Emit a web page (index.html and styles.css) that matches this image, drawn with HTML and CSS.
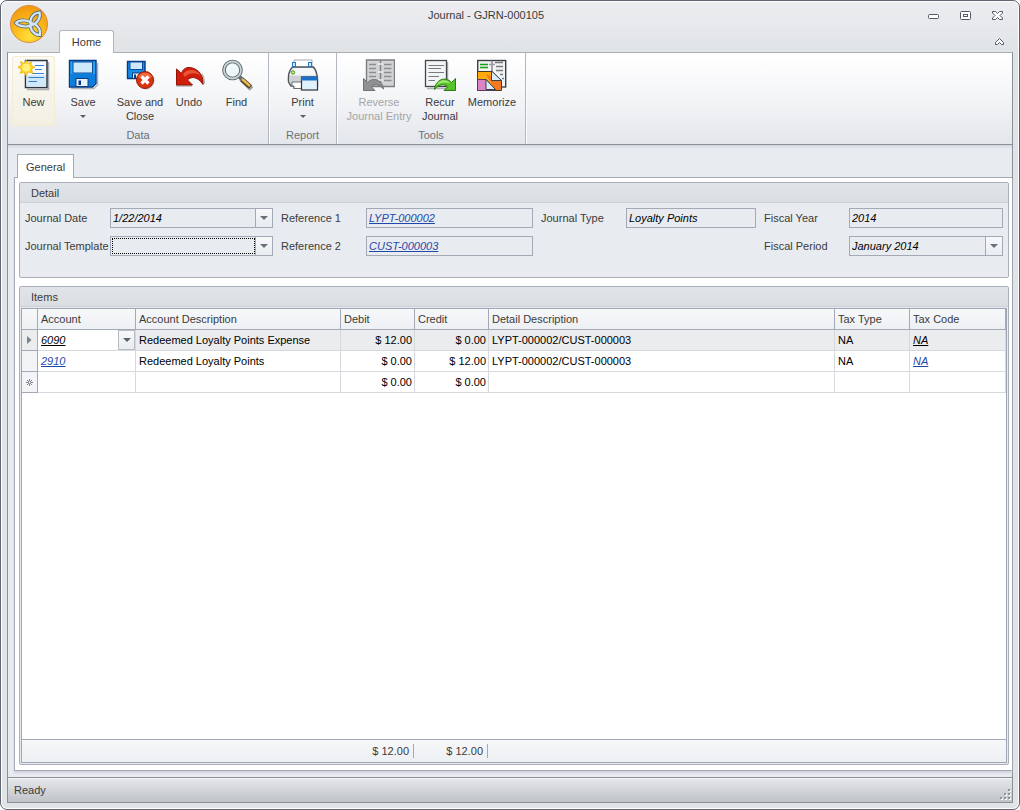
FILE: index.html
```html
<!DOCTYPE html>
<html lang="en">
<head>
    <meta charset="UTF-8">
    <meta name="viewport" content="width=device-width, initial-scale=1.0">
    <title>Journal - GJRN-000105</title>
    <link rel="stylesheet" href="styles.css">
</head>
<body>

    <div class="window">
        <header class="titlebar">
            <button class="app-button" aria-label="Application menu">
                <svg width="40" height="40" viewBox="0 0 40 40">
                    <defs>
                        <radialGradient id="orb" cx="50%" cy="85%" r="80%">
                            <stop offset="0" stop-color="#ffe03a"/>
                            <stop offset="0.5" stop-color="#fdbb1c"/>
                            <stop offset="1" stop-color="#f39a10"/>
                        </radialGradient>
                    </defs>
                    <circle cx="20" cy="20" r="18.5" fill="url(#orb)" stroke="#dc8a3c"/>
                    <g fill="none" stroke="#5b6a78" stroke-width="3.8">
                        <path d="M24 20.5C19 15 10 15.500 7 19C10 22.500 19 24 24 20.5Z"/>
                        <path d="M22 21C20 15 24 9 30.500 8.500C32 13 28.500 20 22 21Z"/>
                        <path d="M22 19C28 20 32 25 31 31C25 31 20 25 22 19Z"/>
                    </g>
                    <g fill="none" stroke="#d3e6f4" stroke-width="2.2">
                        <path d="M24 20.5C19 15 10 15.500 7 19C10 22.500 19 24 24 20.5Z"/>
                        <path d="M22 21C20 15 24 9 30.500 8.500C32 13 28.500 20 22 21Z"/>
                        <path d="M22 19C28 20 32 25 31 31C25 31 20 25 22 19Z"/>
                    </g>
                </svg>
            </button>
            <div class="title-text">Journal - GJRN-000105</div>
            <div class="window-buttons">
                <button aria-label="Minimize">
                    <svg width="13" height="13" viewBox="0 0 13 13"><rect x="1.5" y="5.5" width="10" height="4" rx="1" fill="#fff" stroke="#535a66"/></svg>
                </button>
                <button aria-label="Restore">
                    <svg width="13" height="13" viewBox="0 0 13 13"><rect x="1.5" y="2.5" width="10" height="8" rx="1" fill="#fff" stroke="#535a66"/><rect x="4.5" y="5.5" width="4" height="2" fill="#fff" stroke="#535a66"/></svg>
                </button>
                <button aria-label="Close">
                    <svg width="13" height="13" viewBox="0 0 13 13"><path d="M1.5 2.5H4.5L6.5 4.5L8.5 2.5H11.5V4L9 6.5L11.5 9V10.5H8.5L6.5 8.5L4.5 10.5H1.5V9L4 6.5L1.5 4Z" fill="#fff" stroke="#535a66"/></svg>
                </button>
            </div>
            <nav class="ribbon-tabs">
                <button class="ribbon-tab">Home</button>
                <button class="collapse" aria-label="Collapse ribbon">
                    <svg width="11" height="9" viewBox="0 0 11 9"><path d="M5.5 1.5L9.5 5.5V7.5H7.5L5.5 5.5L3.5 7.5H1.5V5.5Z" fill="#fff" stroke="#535a66"/></svg>
                </button>
            </nav>
        </header>

        <div class="frame">
            <div class="ribbon">
                <section class="ribbon-group">
                    <div class="tools data-tools">
                        <button class="tool active">
                            <svg width="32" height="32" viewBox="0 0 32 32">
                                <path d="M9 30.500H30.500V3" fill="none" stroke="#a9adb2" stroke-width="1.600"/>
                                <rect x="7.500" y="1.500" width="21.500" height="27" fill="#f4faff" stroke="#2f353c" stroke-width="1.500"/>
                                <path d="M8.500 16H28V27.700H8.500Z" fill="#cfe8fa"/>
                                <path d="M17 6.500H26M17 10.500H24M14 14.500H26M10.500 18.500H26M10.500 22.500H19" stroke="#3b7ed0" stroke-width="1.200"/>
                                <path d="M8 1L10 4.500L13.500 2.500L13 6.500L17 8L13.500 10.500L15 14.500L10.500 13L8 17L6 13L2 14.500L3.500 10.500L-0.500 8L3.500 6.500L2.500 2.500L6.500 4.500Z" fill="#ffd21e" stroke="#e5a800" stroke-width="0.600"/>
                                <circle cx="8.300" cy="8.500" r="4" fill="#fff27a"/>
                            </svg>
                            <span>New</span>
                        </button>
                        <button class="tool">
                            <svg width="32" height="32" viewBox="0 0 32 32">
                                <path d="M4 29.500H27L30.500 26V4" fill="none" stroke="#b5b9be" stroke-width="1.500"/>
                                <path d="M2.500 1.500H29V24.500L25.500 28H2.500Z" fill="#27a3f0" stroke="#063a86" stroke-width="1.400"/>
                                <path d="M3.500 15H28V24L25 27H3.500Z" fill="#0b7ddd"/>
                                <rect x="6" y="3" width="19.500" height="11" fill="#cfe9fc" stroke="#0b4c9c"/>
                                <rect x="9" y="19.500" width="12" height="8" fill="#e9f3fa" stroke="#083e80"/>
                                <rect x="11.500" y="21.500" width="2.500" height="4.500" fill="#063a86"/>
                            </svg>
                            <span>Save</span>
                            <i class="arrow"></i>
                        </button>
                        <button class="tool">
                            <svg width="32" height="32" viewBox="0 0 32 32">
                                <path d="M3.500 2.500H21V19.500H3.500Z" fill="#168fe8" stroke="#063a86" stroke-width="1.400"/>
                                <rect x="6" y="3" width="12.500" height="7.500" fill="#cfe9fc" stroke="#0b4c9c"/>
                                <rect x="8.500" y="14" width="9" height="5.500" fill="#e9f3fa" stroke="#083e80"/>
                                <rect x="10" y="15.500" width="2" height="3.500" fill="#063a86"/>
                                <circle cx="22" cy="22" r="8.500" fill="#8b8f95" opacity="0.5"/>
                                <circle cx="21" cy="21" r="8.500" fill="#d9340f" stroke="#9c1d04"/>
                                <path d="M14 18A8 8 0 0 1 28 18Q21 22 14 18Z" fill="#ef6a42"/>
                                <path d="M17.500 17.500L24.500 24.500M24.500 17.500L17.500 24.500" stroke="#fff" stroke-width="3.200"/>
                            </svg>
                            <span>Save and<br>Close</span>
                        </button>
                        <button class="tool">
                            <svg width="32" height="32" viewBox="0 0 32 32">
                                <path d="M3 27H19M31 25Q32 20 29 15" fill="none" stroke="#b5b9be" stroke-width="1.500"/>
                                <path d="M3.500 10V26H19.500L14.500 21C18 17 25 17.500 30 25.500C31 14 22 8 15 8.500C11.500 9 9.500 11 8.500 14.500Z" fill="#cf1f0b" stroke="#941104"/>
                                <path d="M10 15C13 10 22 8.500 28 16.500C21 12.500 15 14 12 18Z" fill="#e9553a"/>
                            </svg>
                            <span>Undo</span>
                        </button>
                        <button class="tool">
                            <svg width="32" height="32" viewBox="0 0 32 32">
                                <path d="M20 20L30.500 30" stroke="#9b9fa5" stroke-width="5"/>
                                <path d="M18 17.500L22 21" stroke="#676e74" stroke-width="4"/>
                                <path d="M21 20.500L29.500 28" stroke="#5c461a" stroke-width="5"/>
                                <path d="M21 20L29 27" stroke="#e6b95a" stroke-width="2.400"/>
                                <circle cx="11.500" cy="11" r="8.500" fill="#eef7f8" stroke="#596167" stroke-width="3.600"/>
                                <circle cx="11.500" cy="11" r="8.500" fill="none" stroke="#c6d2d4" stroke-width="1.800"/>
                                <path d="M7 11A5 5 0 0 1 11.500 6" fill="none" stroke="#fff" stroke-width="1.600"/>
                            </svg>
                            <span>Find</span>
                        </button>
                    </div>
                    <div class="group-name">Data</div>
                </section>

                <section class="ribbon-group">
                    <div class="tools report-tools">
                        <button class="tool">
                            <svg width="32" height="32" viewBox="0 0 32 32">
                                <path d="M7 1H25V9H7Z" fill="#fff" stroke="#a4a9af"/>
                                <path d="M5.500 8H26.500Q30 12 30.500 20V27H26V29H7V27H4L1.500 23Q0.500 13 5.500 8Z" fill="#cfd1d4" stroke="#4d5259" stroke-width="1.300"/>
                                <path d="M6.500 9H25.500Q28 12 29 16.500H2.500Q3.500 12 6.500 9Z" fill="#f5f6f7"/>
                                <path d="M5 23H17V29.500H7V27H5Z" fill="#fff" stroke="#6b7077"/>
                                <rect x="5.500" y="3.500" width="3" height="4" fill="#cfe9fc" stroke="#1d7ccc"/>
                                <rect x="21.500" y="3.500" width="3" height="4" fill="#cfe9fc" stroke="#1d7ccc"/>
                                <circle cx="6" cy="13.500" r="1.700" fill="#bff07a" stroke="#4b9b1b"/>
                                <rect x="14.500" y="18" width="16" height="13" fill="#dff1fd" stroke="#2f353c" stroke-width="1.200"/>
                                <rect x="14" y="17.500" width="17" height="4" fill="#1c6fc8"/>
                            </svg>
                            <span>Print</span>
                            <i class="arrow"></i>
                        </button>
                    </div>
                    <div class="group-name">Report</div>
                </section>

                <section class="ribbon-group">
                    <div class="tools journal-tools">
                        <button class="tool" disabled>
                            <svg width="32" height="32" viewBox="0 0 32 32">
                                <path d="M3.500 1H31.500V27.500H3.500Z" fill="#d2d3d5" stroke="#7c7e81" stroke-width="1.400"/>
                                <path d="M17.500 1V27" stroke="#808285" stroke-width="1.500"/>
                                <path d="M6 5.500H13M6 9.500H13M6 13.500H13M6 17.500H13M21 5.500H28.500M21 9.500H28.500M21 13.500H28.500M21 17.500H28.500M21 21.500H28.500" stroke="#8c8e91" stroke-width="1.300"/>
                                <path d="M15 5H20M15 13H20M15 21H20" stroke="#eee" stroke-width="1.500"/>
                                <path d="M0.500 19.500V31.500H12L8.500 28C11 24.500 16 25 20.500 30C19.500 21 10 17.500 4.500 23.500Z" fill="#8f9194" stroke="#6f7174"/>
                            </svg>
                            <span>Reverse<br>Journal Entry</span>
                        </button>
                        <button class="tool">
                            <svg width="32" height="32" viewBox="0 0 32 32">
                                <path d="M3 29.500H23.500V3" fill="none" stroke="#b0b3b7" stroke-width="1.500"/>
                                <rect x="1.500" y="1.500" width="21" height="26" fill="#f3f4f5" stroke="#44484d" stroke-width="1.300"/>
                                <path d="M4.500 6.500H20M4.500 9.500H17M4.500 13.500H20M4.500 17.500H15M4.500 21.500H11" stroke="#777b80" stroke-width="1.200"/>
                                <path d="M31.500 19.500V31.500H20L23.500 28C20.500 24.500 15 25 10.500 30.500C11.500 21 21 16.500 27.500 23.500Z" fill="#57c229" stroke="#2b7d12"/>
                                <path d="M12.500 26.500C15 20.500 22 19.500 26.500 24.500Q18 21.500 12.500 26.500Z" fill="#a2e878"/>
                            </svg>
                            <span>Recur<br>Journal</span>
                        </button>
                        <button class="tool">
                            <svg width="32" height="32" viewBox="0 0 32 32">
                                <rect x="1.700" y="1.500" width="28" height="26.500" fill="#f1f2f3" stroke="#3d4146" stroke-width="1.400"/>
                                <path d="M16 1.500V28" stroke="#777b80" stroke-width="1.300"/>
                                <path d="M13 5.500H19" stroke="#999da2" stroke-width="1.500"/>
                                <path d="M4 5.500H12M4 8.500H12" stroke="#16a016" stroke-width="1.500"/>
                                <path d="M19 3.500H27M20 7.500H27M20 11.500H27M24 15.500H27M26 19.500H28" stroke="#777b80" stroke-width="1.300"/>
                                <path d="M1.500 12.500H16L25.500 21.500V31.500H1.500Z" fill="#ffac0c" stroke="#4a3b26"/>
                                <path d="M10 15L25 22V31H19Z" fill="#f4781f"/>
                                <path d="M15.500 12L25.500 21.500H15.500Z" fill="#d9edf8" stroke="#3a3f48"/>
                                <path d="M1.500 20.500H10L20 31.500H1.500Z" fill="#d984c4" stroke="#5a3c58"/>
                                <path d="M10 20.500L19.500 30.500H10Z" fill="#d9edf8" stroke="#3a3f48"/>
                            </svg>
                            <span>Memorize</span>
                        </button>
                    </div>
                    <div class="group-name">Tools</div>
                </section>
            </div>

            <main class="content">
                <button class="page-tab">General</button>
                <div class="page">
                    <section class="group">
                        <h2>Detail</h2>
                        <form class="fields">
                            <div class="field">
                                <label for="date">Journal Date</label>
                                <div class="combo">
                                    <select id="date"><option>1/22/2014</option></select>
                                </div>
                            </div>
                            <div class="field">
                                <span id="ref1">Reference 1</span>
                                <div class="box" aria-labelledby="ref1"><a href="#">LYPT-000002</a></div>
                            </div>
                            <div class="field">
                                <label for="type">Journal Type</label>
                                <input class="box" id="type" type="text" value="Loyalty Points" readonly>
                            </div>
                            <div class="field">
                                <label for="year">Fiscal Year</label>
                                <input class="box" id="year" type="text" value="2014" readonly>
                            </div>
                            <div class="field">
                                <label for="template">Journal Template</label>
                                <div class="combo focused">
                                    <select id="template"><option></option></select>
                                </div>
                            </div>
                            <div class="field">
                                <span id="ref2">Reference 2</span>
                                <div class="box" aria-labelledby="ref2"><a href="#">CUST-000003</a></div>
                            </div>
                            <div class="field last">
                                <label for="period">Fiscal Period</label>
                                <div class="combo">
                                    <select id="period"><option>January 2014</option></select>
                                </div>
                            </div>
                        </form>
                    </section>

                    <section class="group items">
                        <h2>Items</h2>
                        <div class="grid">
                            <table>
                                <colgroup>
                                    <col class="col-mark">
                                    <col class="col-account">
                                    <col class="col-description">
                                    <col class="col-amount">
                                    <col class="col-amount">
                                    <col>
                                    <col class="col-type">
                                    <col class="col-code">
                                </colgroup>
                                <thead>
                                    <tr>
                                        <th></th>
                                        <th>Account</th>
                                        <th>Account Description</th>
                                        <th>Debit</th>
                                        <th>Credit</th>
                                        <th>Detail Description</th>
                                        <th>Tax Type</th>
                                        <th>Tax Code</th>
                                    </tr>
                                </thead>
                                <tbody>
                                    <tr class="current">
                                        <td class="mark"><svg width="5" height="8" viewBox="0 0 5 8"><path d="M0 0L4.500 4L0 8Z" fill="#7b828d"/></svg></td>
                                        <td class="editing">
                                            <div class="editor">
                                                <a href="#">6090</a>
                                                <button aria-label="Choose account"><i class="arrow"></i></button>
                                            </div>
                                        </td>
                                        <td>Redeemed Loyalty Points Expense</td>
                                        <td class="amount">$ 12.00</td>
                                        <td class="amount">$ 0.00</td>
                                        <td>LYPT-000002/CUST-000003</td>
                                        <td>NA</td>
                                        <td><a href="#">NA</a></td>
                                    </tr>
                                    <tr>
                                        <td class="mark"></td>
                                        <td><a href="#">2910</a></td>
                                        <td>Redeemed Loyalty Points</td>
                                        <td class="amount">$ 0.00</td>
                                        <td class="amount">$ 12.00</td>
                                        <td>LYPT-000002/CUST-000003</td>
                                        <td>NA</td>
                                        <td><a href="#">NA</a></td>
                                    </tr>
                                    <tr>
                                        <td class="mark"><svg width="7" height="7" viewBox="0 0 7 7"><path d="M3.500 0V7M0 3.500H7M1 1L6 6M6 1L1 6" stroke="#7b828d"/><circle cx="3.500" cy="3.500" r="1" fill="#fff"/></svg></td>
                                        <td></td>
                                        <td></td>
                                        <td class="amount">$ 0.00</td>
                                        <td class="amount">$ 0.00</td>
                                        <td></td>
                                        <td></td>
                                        <td></td>
                                    </tr>
                                </tbody>
                            </table>
                            <div class="totals">
                                <span class="total">$ 12.00</span>
                                <span class="total">$ 12.00</span>
                            </div>
                        </div>
                    </section>
                </div>
            </main>

            <footer class="statusbar">
                <span>Ready</span>
                <svg class="grip" width="11" height="11" viewBox="0 0 11 11">
                    <path d="M9 1h2v2H9zM5 5h2v2H5zM9 5h2v2H9zM1 9h2v2H1zM5 9h2v2H5zM9 9h2v2H9z" fill="#fff"/>
                    <path d="M8 0h2v2H8zM4 4h2v2H4zM8 4h2v2H8zM0 8h2v2H0zM4 8h2v2H4zM8 8h2v2H8z" fill="#8f949b"/>
                </svg>
            </footer>
        </div>
    </div>

</body>
</html>
```

FILE: styles.css
```css
* {
    box-sizing: border-box;
}
body {
    margin: 0;
    background: #fff;
    color: #3b3b3b;
    font-family: "Liberation Sans", Arial, sans-serif;
    font-size: 11px;
    line-height: 14px;
}
button, input, select {
    margin: 0;
    padding: 0;
    border: none;
    border-radius: 0;
    background: none;
    color: inherit;
    font: inherit;
}
svg {
    display: block;
}
a {
    color: #1f49a8;
    font-style: italic;
}

/* window frame */
.window {
    display: flex;
    flex-direction: column;
    min-height: 100vh;
    padding: 0 6px 6px;
    border: 1px solid #5f6672;
    border-radius: 7px;
    background: linear-gradient(#ededf0, #e0e4e7 50px);
    box-shadow: inset 0 0 0 1px #fff;
}
.titlebar {
    display: grid;
    grid-template-columns: 44px 1fr auto;
    grid-template-rows: 29px 22px;
}
.app-button {
    grid-row: 1 / 3;
    align-self: start;
    padding: 3px 0 0 2px;
}
.title-text {
    padding: 7px 0 0 4px;
    text-align: center;
}
.window-buttons {
    display: flex;
    align-items: center;
    padding-bottom: 1px;
}
.window-buttons button {
    display: flex;
    justify-content: center;
    width: 32px;
}
.ribbon-tabs {
    grid-column: 2 / 4;
    display: flex;
    justify-content: space-between;
    align-items: center;
    padding: 0 8px;
}
.ribbon-tab {
    position: relative;
    z-index: 1;
    align-self: start;
    height: 23px;
    width: 55px;
    border: 1px solid #b1b5bd;
    border-bottom: none;
    border-radius: 3px 3px 0 0;
    background: #fff;
}
.frame {
    flex: 1;
    display: flex;
    flex-direction: column;
    border: 1px solid #8a8f98;
    border-top-color: #a9adb6;
}

/* ribbon */
.ribbon {
    display: flex;
    border-bottom: 1px solid #8a8f98;
    background: linear-gradient(#fff, #f5f6f8 45%, #e3e6eb);
}
.ribbon-group {
    padding: 3px 4px 2px;
    border-right: 1px solid #b4b9c1;
    box-shadow: 1px 0 0 #fafbfc;
}
.tools {
    display: grid;
    height: 72px;
}
.data-tools {
    grid-template-columns: 43px 56px 58px 40px 55px;
}
.report-tools {
    grid-template-columns: 59px;
}
.journal-tools {
    grid-template-columns: 76px 46px 58px;
}
.tool {
    display: flex;
    flex-direction: column;
    align-items: center;
    gap: 4px;
    height: 70px;
    padding-top: 3px;
    white-space: nowrap;
}
.tool.active {
    border-radius: 3px;
    background: linear-gradient(#fbfaf5, #f2efe2);
    box-shadow: inset 0 0 0 1px #f4ecd2;
}
.tool:disabled {
    color: #a3a5a9;
}
.arrow {
    display: block;
    border: 3px solid transparent;
    border-top-color: #5b6068;
    border-bottom: none;
}
.tool .arrow {
    margin-top: 2px;
}
.group-name {
    color: #6b717c;
    text-align: center;
}

/* page */
.content {
    flex: 1;
    display: flex;
    flex-direction: column;
    padding: 9px 0 6px 6px;
    background: linear-gradient(#d3d6db, #e8ebf0 4px);
}
.page-tab {
    position: relative;
    z-index: 1;
    align-self: flex-start;
    height: 24px;
    margin: 0 0 -1px 3px;
    padding: 0 8px;
    border: 1px solid #a3a9b5;
    border-bottom: none;
    background: #fff;
}
.page {
    flex: 1;
    display: flex;
    flex-direction: column;
    gap: 8px;
    padding: 4px 3px 5px 4px;
    border: 1px solid #a3a9b5;
    border-right: none;
    background: #fff;
    box-shadow: 0 2px 2px #d0d4da;
}
.group {
    border: 1px solid #a9aeb8;
    border-radius: 2px;
    background: #e8ebf0;
}
.group h2 {
    margin: 0;
    padding: 3px 11px 2px;
    border-bottom: 1px solid #cdd1d6;
    background: linear-gradient(#e1e4e8, #dadee2);
    font-size: 11px;
    line-height: 14px;
    font-weight: normal;
}
.fields {
    display: grid;
    grid-template-columns: 248fr 252fr 215fr 239fr;
    gap: 8px;
    padding: 5px 5px 21px;
}
.field {
    display: grid;
    grid-template-columns: 85px 1fr;
    align-items: center;
    min-width: 0;
}
.field.last {
    grid-column: 4;
}
.box, .combo {
    min-width: 0;
    width: 100%;
    height: 20px;
    border: 1px solid #a3a9b5;
}
.box {
    padding: 2px;
}
input, select {
    color: #000;
    font-style: italic;
}
.combo {
    position: relative;
}
.combo select {
    appearance: none;
    display: block;
    width: 100%;
    height: 18px;
    padding: 0 18px 0 2px;
    outline: none;
}
.combo::before {
    content: "";
    position: absolute;
    top: 0;
    right: 0;
    width: 16px;
    height: 18px;
    border-left: 1px solid #a3a9b5;
    background: linear-gradient(#f7f8fa, #e9edf0);
    pointer-events: none;
}
.combo::after {
    content: "";
    position: absolute;
    top: 7px;
    right: 4px;
    border: 4px solid transparent;
    border-top-color: #69717a;
    border-bottom: none;
    pointer-events: none;
}
.combo.focused select {
    width: calc(100% - 18px);
    height: 16px;
    margin: 1px;
    border: 1px dotted #000;
}

/* items grid */
.items {
    flex: 1;
    display: flex;
    flex-direction: column;
}
.grid {
    flex: 1;
    display: flex;
    flex-direction: column;
    margin: 1px;
    border: 1px solid #9fa6b3;
    background: #fff;
}
table {
    width: 100%;
    table-layout: fixed;
    border-collapse: separate;
    border-spacing: 0;
    color: #000;
}
.col-mark {
    width: 16px;
}
.col-account {
    width: 98px;
}
.col-description {
    width: 205px;
}
.col-amount {
    width: 74px;
}
.col-type {
    width: 75px;
}
.col-code {
    width: 96px;
}
th, td {
    height: 21px;
    padding: 0 3px;
    border-right: 1px solid #d5d9de;
    border-bottom: 1px solid #d5d9de;
    text-align: left;
    white-space: nowrap;
}
th {
    border-color: #a3a9b5;
    background: linear-gradient(#f7f8fa, #edf0f4);
    color: #3b3b3b;
    font-weight: normal;
}
td.mark {
    border-color: #a3a9b5;
    background: #f2f4f7;
}
.mark svg {
    margin: 0 auto;
}
td.amount {
    padding-right: 2px;
    text-align: right;
}
.current td {
    background: #ebecee;
}
.current a {
    color: #000;
}
.current td.editing {
    padding-right: 0;
    background: #fff;
}
.editor {
    display: flex;
    justify-content: space-between;
    align-items: center;
}
.editor button {
    display: flex;
    justify-content: center;
    align-items: center;
    width: 17px;
    height: 20px;
    border: 1px solid #b6bbc4;
    background: linear-gradient(#f7f8fa, #e9edf0);
}
.editor .arrow {
    border-width: 4px 4px 0;
}
.totals {
    display: grid;
    grid-template-columns: 74px 74px;
    align-items: center;
    height: 23px;
    margin-top: auto;
    padding-left: 318px;
    border-top: 1px solid #a3a9b5;
    background: linear-gradient(#f6f7f9, #edf0f4);
}
.total {
    padding-right: 4px;
    border-right: 1px solid #a3a9b5;
    text-align: right;
}

/* status bar */
.statusbar {
    display: flex;
    justify-content: space-between;
    align-items: center;
    height: 25px;
    padding: 0 1px 0 6px;
    border-top: 1px solid #8a8f98;
    background: linear-gradient(#e6e8eb, #bfc3c7);
    box-shadow: inset 0 1px 0 #f5f6f7;
}
.grip {
    align-self: flex-end;
    margin-bottom: 2px;
}
```
